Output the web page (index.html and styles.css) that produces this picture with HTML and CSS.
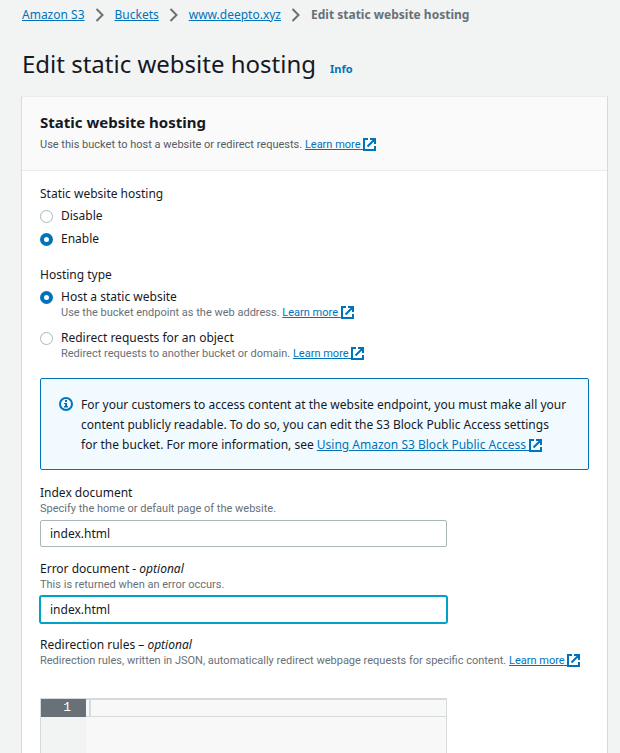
FILE: index.html
```html
<!DOCTYPE html>
<html lang="en">
<head>
<meta charset="utf-8">
<title>Edit static website hosting</title>
<link rel="stylesheet" href="styles.css">
</head>
<body>
<svg class="sprite" aria-hidden="true">
  <symbol id="external" viewBox="0 0 13 13"><path d="M5 1H1v11h11V8M7 1h5v5M12 1L4.500 8.500" fill="none" stroke="currentColor" stroke-width="2"/></symbol>
  <symbol id="chevron" viewBox="0 0 9 14"><path d="M1 1l6 6-6 6" fill="none" stroke="currentColor" stroke-width="2"/></symbol>
</svg>
<nav class="breadcrumbs" aria-label="Breadcrumbs">
  <a href="#">Amazon S3</a>
  <svg class="chevron"><use href="#chevron"/></svg>
  <a href="#">Buckets</a>
  <svg class="chevron"><use href="#chevron"/></svg>
  <a href="#">www.deepto.xyz</a>
  <svg class="chevron"><use href="#chevron"/></svg>
  <span class="current">Edit static website hosting</span>
</nav>
<main>
  <div class="title">
    <h1>Edit static website hosting</h1>
    <a class="info" href="#">Info</a>
  </div>
  <form class="card">
    <header class="card-header">
      <h2>Static website hosting</h2>
      <p class="hint header-hint">Use this bucket to host a website or redirect requests. <a href="#">Learn more <svg class="external"><use href="#external"/></svg></a></p>
    </header>
    <div class="card-body">
      <fieldset>
        <legend>Static website hosting</legend>
        <div class="choice">
          <input type="radio" name="hosting" id="disable">
          <label for="disable">Disable</label>
        </div>
        <div class="choice">
          <input type="radio" name="hosting" id="enable" checked>
          <label for="enable">Enable</label>
        </div>
      </fieldset>
      <fieldset class="roomy">
        <legend>Hosting type</legend>
        <div class="choice">
          <input type="radio" name="type" id="host" checked>
          <div>
            <label for="host">Host a static website</label>
            <p class="hint">Use the bucket endpoint as the web address. <a href="#">Learn more <svg class="external"><use href="#external"/></svg></a></p>
          </div>
        </div>
        <div class="choice">
          <input type="radio" name="type" id="redirect">
          <div>
            <label for="redirect">Redirect requests for an object</label>
            <p class="hint">Redirect requests to another bucket or domain. <a href="#">Learn more <svg class="external"><use href="#external"/></svg></a></p>
          </div>
        </div>
      </fieldset>
      <div class="alert">
        <svg class="info-icon" viewBox="0 0 14 14"><circle cx="7" cy="7" r="6" fill="none" stroke="currentColor" stroke-width="2"/><path d="M6 3h2v2H6zM5 6h3v4H6V7H5zM5 9h4v1.500H5z" fill="currentColor"/></svg>
        <p>For your customers to access content at the website endpoint, you must make all your content publicly readable. To do so, you can edit the S3 Block Public Access settings for&nbsp;the bucket. For more information, see <a href="#">Using Amazon S3 Block Public Access <svg class="external"><use href="#external"/></svg></a></p>
      </div>
      <div class="field">
        <label for="index">Index document</label>
        <p class="hint">Specify the home or default page of the website.</p>
        <input type="text" id="index" value="index.html">
      </div>
      <div class="field">
        <label for="error">Error document - <em>optional</em></label>
        <p class="hint">This is returned when an error occurs.</p>
        <input type="text" id="error" class="active" value="index.html">
      </div>
      <div class="field">
        <label for="rules">Redirection rules – <em>optional</em></label>
        <p class="hint">Redirection rules, written in JSON, automatically redirect webpage requests for specific content. <a href="#">Learn more <svg class="external"><use href="#external"/></svg></a></p>
        <div class="editor">
          <div class="gutter"><span>1</span></div>
          <div class="code"><textarea id="rules" rows="1"></textarea></div>
        </div>
      </div>
    </div>
  </form>
</main>
</body>
</html>
```
FILE: styles.css
```css
* { box-sizing: border-box; }
html { height: 100%; overflow: hidden; }
body {
  height: 100%;
  overflow: hidden;
  margin: 0;
  padding: 5px 12px 0 21px;
  background: #f2f3f3;
  color: #16191f;
  font: 12px/18px "Noto Sans", "Open Sans", sans-serif;
}
h1, h2, p, fieldset { margin: 0; padding: 0; border: 0; }
a { color: #0073bb; }
.sprite { display: none; }
.breadcrumbs { display: flex; align-items: center; gap: 10px; height: 20px; padding-left: 1px; white-space: nowrap; }
.chevron { width: 10px; height: 14px; color: #687078; }
.current { color: #687078; font-weight: 700; }
.title { display: flex; align-items: baseline; gap: 14px; padding: 21px 1px 14px; }
h1 { font-size: 24px; line-height: 36px; font-weight: 400; }
.info { font-size: 11px; font-weight: 700; text-decoration: none; }
.card { background: #fff; border: 1px solid #d5dbdb; border-top-color: #eaeded; }
.card-header { padding: 13px 18px 16px; background: #fafafa; border-bottom: 1px solid #eaeded; }
h2 { margin-bottom: 2px; font-size: 15px; line-height: 24px; font-weight: 700; }
.hint { color: #687078; font-family: Roboto, "Noto Sans", sans-serif; font-size: 11px; line-height: 14px; }
.header-hint { line-height: 18px; color: #545b64; }
.external { width: 13px; height: 13px; vertical-align: -3px; }
.card-body { padding: 14px 18px 0; }
legend { padding: 0; margin-bottom: 4px; }
fieldset { margin-bottom: 18px; }
fieldset.roomy { margin-bottom: 17px; }
.choice { display: flex; gap: 8px; }
.choice + .choice { margin-top: 5px; }
.roomy .choice + .choice { margin-top: 9px; }
.choice label { display: block; }
input[type="radio"] { appearance: none; flex: none; width: 13px; height: 13px; margin: 3px 0 0; border: 1px solid #aab7b8; border-radius: 50%; background: #fff; }
input[type="radio"]:checked { border: 4px solid #0073bb; }
.alert { display: flex; gap: 8px; padding: 16px 18px 14px; margin-bottom: 14px; background: #f1faff; border: 1px solid #0073bb; border-radius: 2px; line-height: 20px; }
.info-icon { flex: none; width: 14px; height: 14px; margin-top: 2px; color: #0073bb; }
.field { margin-bottom: 13px; }
.field > label { display: block; }
input[type="text"] { display: block; width: calc(75% - 5px); height: 27px; margin-top: 4px; padding: 0 9px; border: 1px solid #aab7b8; border-radius: 2px; background: #fff; color: inherit; font: inherit; }
input.active { border-color: #00a1c9; outline: none; box-shadow: 0 0 0 1px #00a1c9; }
.editor { display: flex; width: calc(75% - 5px); height: 200px; margin-top: 30px; border: 1px solid #d5dbdb; background: #f8f8f8; font: 13px/18px "Liberation Mono", monospace; }
.gutter { flex: none; width: 45px; background: #f2f3f3; }
.gutter span { display: block; padding-right: 15px; background: #687078; color: #fff; text-align: right; }
.code { flex: 1; height: 18px; padding-left: 3px; border-top: 1px solid #d5dbdb; border-bottom: 1px solid #d5dbdb; }
.code textarea { display: block; width: 100%; height: 16px; padding: 0; resize: none; border: 0; border-left: 2px solid #d5dbdb; background: none; font: inherit; outline: none; }
```
